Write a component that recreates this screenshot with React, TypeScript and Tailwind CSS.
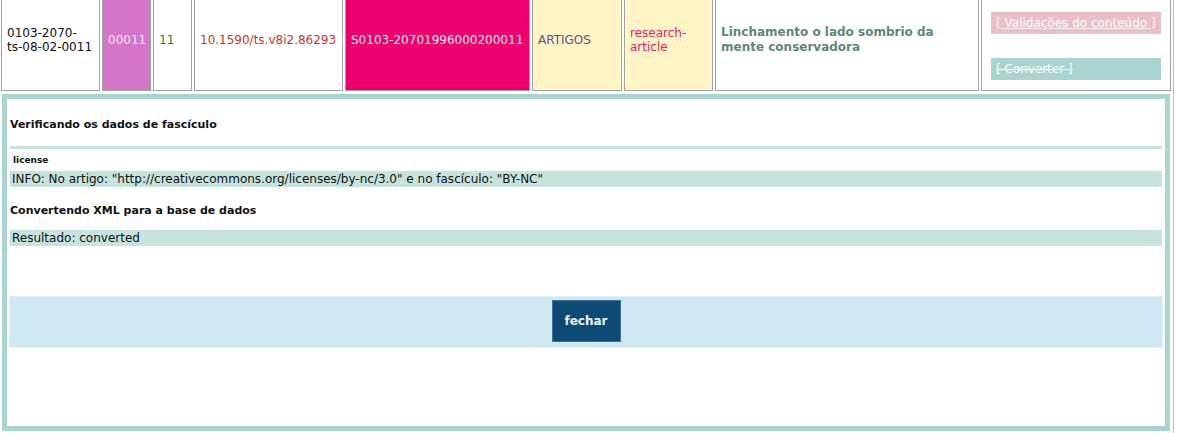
import React from "react";

const cellBase =
  "h-[91px] border border-t-0 border-[#a3a3a3] flex items-center pb-[11px] px-[5px] text-[12px] leading-[14px]";

const Cells = () => {
  return (
    <div className="flex gap-[2px] pl-[1px]">
      <div className={`${cellBase} w-[99px] bg-white text-[#111]`}>
        <span>
          0103-2070-
          <br />
          ts-08-02-0011
        </span>
      </div>
      <div className={`${cellBase} w-[49px] bg-[#d375c8] text-[#f8e4f4]`}>00011</div>
      <div className={`${cellBase} w-[39px] bg-white text-[#2f7d22]`}>11</div>
      <div className={`${cellBase} w-[149px] bg-white text-[#c8342f]`}>10.1590/ts.v8i2.86293</div>
      <div className={`${cellBase} w-[185px] bg-[#eb006d] text-[#ffe6f1]`}>S0103-20701996000200011</div>
      <div className={`${cellBase} w-[90px] bg-[#fff5c6] text-[#6b4a8a]`}>ARTIGOS</div>
      <div className={`${cellBase} w-[89px] bg-[#fff5c6] text-[#e8196e]`}>
        <span>
          research-
          <br />
          article
        </span>
      </div>
      <div className={`${cellBase} w-[264px] bg-white text-[#62857a] font-bold leading-[15px]`}>
        <span>
          Linchamento o lado sombrio da
          <br />
          mente conservadora
        </span>
      </div>
      <div className="h-[91px] w-[190px] border border-t-0 border-[#a3a3a3] bg-white px-[9px] pt-[12px] text-[12px]">
        <div className="h-[22px] bg-[#ebbfc6] px-[5px] leading-[22px] text-white underline">
          [ Validações do conteúdo ]
        </div>
        <div className="mt-[24px] h-[22px] bg-[#a9d4cf] px-[5px] leading-[22px] text-white line-through">
          [ Converter ]
        </div>
      </div>
    </div>
  );
};

const Panel = () => {
  return (
    <div className="ml-[2px] mt-[3px] h-[337px] w-[1168px] border-[5px] border-[#a9d4cf] bg-white px-[3px] text-[#111]">
      <div className="mt-[19px] h-[13px] text-[11px] font-bold leading-[13px]">
        Verificando os dados de fascículo
      </div>
      <div className="mt-[15px] h-[3px] bg-[#c6e3de]" />
      <div className="mt-[5px] h-[12px] pl-[3px] text-[9px] font-bold leading-[12px]">license</div>
      <div className="mt-[5px] h-[16px] bg-[#c6e3de] pl-[2px] text-[12px] leading-[16px]">
        INFO: No artigo: "http://creativecommons.org/licenses/by-nc/3.0" e no fascículo: "BY-NC"
      </div>
      <div className="mt-[17px] h-[13px] text-[11px] font-bold leading-[13px]">
        Convertendo XML para a base de dados
      </div>
      <div className="mt-[13px] h-[16px] bg-[#c6e3de] pl-[2px] text-[12px] leading-[16px]">
        Resultado: converted
      </div>
      <div className="-mx-[1px] mt-[50px] flex h-[52px] justify-center border border-[#e2f1f7] bg-[#cfe7f1] pt-[3px]">
        <button
          type="button"
          className="h-[42px] w-[69px] border border-[#3f7191] bg-[#0e4b74] text-[12px] font-bold text-[#eef4f8]"
        >
          fechar
        </button>
      </div>
    </div>
  );
};

export default function App() {
  return (
    <div
      className="h-[433px] w-[1174px] overflow-hidden border-r border-[#d9aebd] bg-white"
      style={{ fontFamily: '"DejaVu Sans", Verdana, sans-serif' }}
    >
      <Cells />
      <Panel />
    </div>
  );
}
